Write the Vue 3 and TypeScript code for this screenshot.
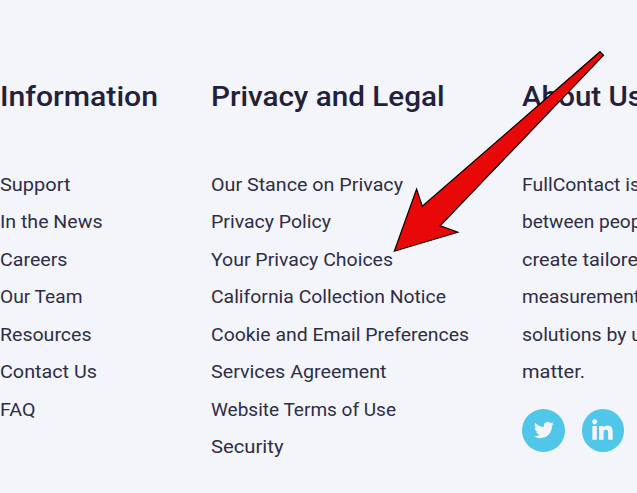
<script setup lang="ts">
interface Line {
  text: string
  width: number
}

const information: Line[] = [
  { text: 'Support', width: 70.5 },
  { text: 'In the News', width: 102.5 },
  { text: 'Careers', width: 67.5 },
  { text: 'Our Team', width: 82.5 },
  { text: 'Resources', width: 91.5 },
  { text: 'Contact Us', width: 97 },
  { text: 'FAQ', width: 35.5 },
]

const legal: Line[] = [
  { text: 'Our Stance on Privacy', width: 192 },
  { text: 'Privacy Policy', width: 120 },
  { text: 'Your Privacy Choices', width: 182 },
  { text: 'California Collection Notice', width: 235 },
  { text: 'Cookie and Email Preferences', width: 258 },
  { text: 'Services Agreement', width: 175.5 },
  { text: 'Website Terms of Use', width: 185 },
  { text: 'Security', width: 72.5 },
]

const about: Line[] = [
  { text: 'FullContact is', width: 118 },
  { text: 'between peop', width: 119.5 },
  { text: 'create tailore', width: 116 },
  { text: 'measurement', width: 118 },
  { text: 'solutions by u', width: 120 },
  { text: 'matter.', width: 63 },
]

const vFit = {
  mounted(el: HTMLElement, binding: { value: number }) {
    const natural = el.getBoundingClientRect().width
    el.style.transform = `scaleX(${binding.value / natural})`
  },
}
</script>

<template>
  <footer class="footer">
    <section class="column information">
      <h2><span v-fit="158" class="line">Information</span></h2>
      <ul>
        <li v-for="l in information" :key="l.text"><a v-fit="l.width" class="line">{{ l.text }}</a></li>
      </ul>
    </section>
    <section class="column legal">
      <h2><span v-fit="233.5" class="line">Privacy and Legal</span></h2>
      <ul>
        <li v-for="l in legal" :key="l.text"><a v-fit="l.width" class="line">{{ l.text }}</a></li>
      </ul>
    </section>
    <section class="column about">
      <h2><span v-fit="121" class="line">About Us</span></h2>
      <p v-for="l in about" :key="l.text"><span v-fit="l.width" class="line">{{ l.text }}</span></p>
      <div class="social">
        <a class="badge" aria-label="Twitter">
          <svg class="twitter" viewBox="0 0 24 24"><path d="M23.95 4.57a10 10 0 0 1-2.82.77 4.96 4.96 0 0 0 2.16-2.72c-.95.55-2 .95-3.13 1.18a4.92 4.92 0 0 0-8.38 4.48C7.69 8.1 4.07 6.13 1.64 3.16a4.93 4.93 0 0 0 1.52 6.57 4.9 4.9 0 0 1-2.23-.61v.06a4.92 4.92 0 0 0 3.95 4.83 5 5 0 0 1-2.21.08 4.94 4.94 0 0 0 4.6 3.42A9.87 9.87 0 0 1 0 19.54a14 14 0 0 0 7.55 2.21c9.05 0 14-7.5 14-13.98 0-.21 0-.42-.02-.63a9.94 9.94 0 0 0 2.42-2.57z" /></svg>
        </a>
        <a class="badge" aria-label="LinkedIn">
          <svg class="linkedin" viewBox="0 0 448 448"><path d="M104 440H8V149h96zM56 116C27 116 4 90 4 60a53 53 0 0 1 106 0c0 30-25 56-54 56zM442 440h-97V302c0-34-1-74-46-74-49 0-52 36-52 74v138h-98V149h93v38h1c13-24 43-46 86-46 94 0 113 62 113 142z" /></svg>
        </a>
      </div>
    </section>
    <svg class="arrow" viewBox="0 0 637 493"><path d="M394.3 251.2 416.6 189 422.3 206.3 600 51.7 603.5 55.3 440.2 225.8 457.8 232.2Z" /></svg>
  </footer>
</template>

<style>
body {
  margin: 0;
  overflow: hidden;
}
</style>

<style scoped>
.footer {
  position: relative;
  display: grid;
  grid-template-columns: 211px 311px 115px;
  box-sizing: border-box;
  width: 637px;
  height: 493px;
  padding-top: 77px;
  overflow: hidden;
  background: #f4f5fb;
  color: #2d2d46;
  font-family: Roboto, "Liberation Sans", sans-serif;
  font-size: 18.5px;
  line-height: 37.5px;
  white-space: nowrap;
}
.column {
  min-width: 0;
}
.line {
  display: inline-block;
  transform-origin: 0 50%;
}
h2 {
  height: 40px;
  margin: 0 0 49.6px;
  color: #222139;
  font-size: 28px;
  font-weight: 500;
  line-height: 40px;
}
ul {
  margin: 0;
  padding: 0;
  list-style: none;
}
li,
p {
  height: 37.5px;
  margin: 0;
}
.social {
  display: flex;
  gap: 16.7px;
  padding-top: 17.4px;
}
.badge {
  display: flex;
  flex: none;
  align-items: center;
  justify-content: center;
  width: 43px;
  height: 43px;
  border-radius: 50%;
  background: #50c6e8;
}
.badge + .badge {
  width: 42.5px;
}
.badge svg {
  fill: #f4f5fb;
}
.twitter {
  width: 20px;
  height: 20px;
  margin-bottom: 1px;
}
.linkedin {
  width: 21px;
  height: 21px;
  margin-right: 1px;
  margin-bottom: 2px;
}
.arrow {
  position: absolute;
  inset: 0;
  width: 637px;
  height: 493px;
  fill: #e90808;
  stroke: #000;
  stroke-width: 1.2;
  pointer-events: none;
}
</style>
